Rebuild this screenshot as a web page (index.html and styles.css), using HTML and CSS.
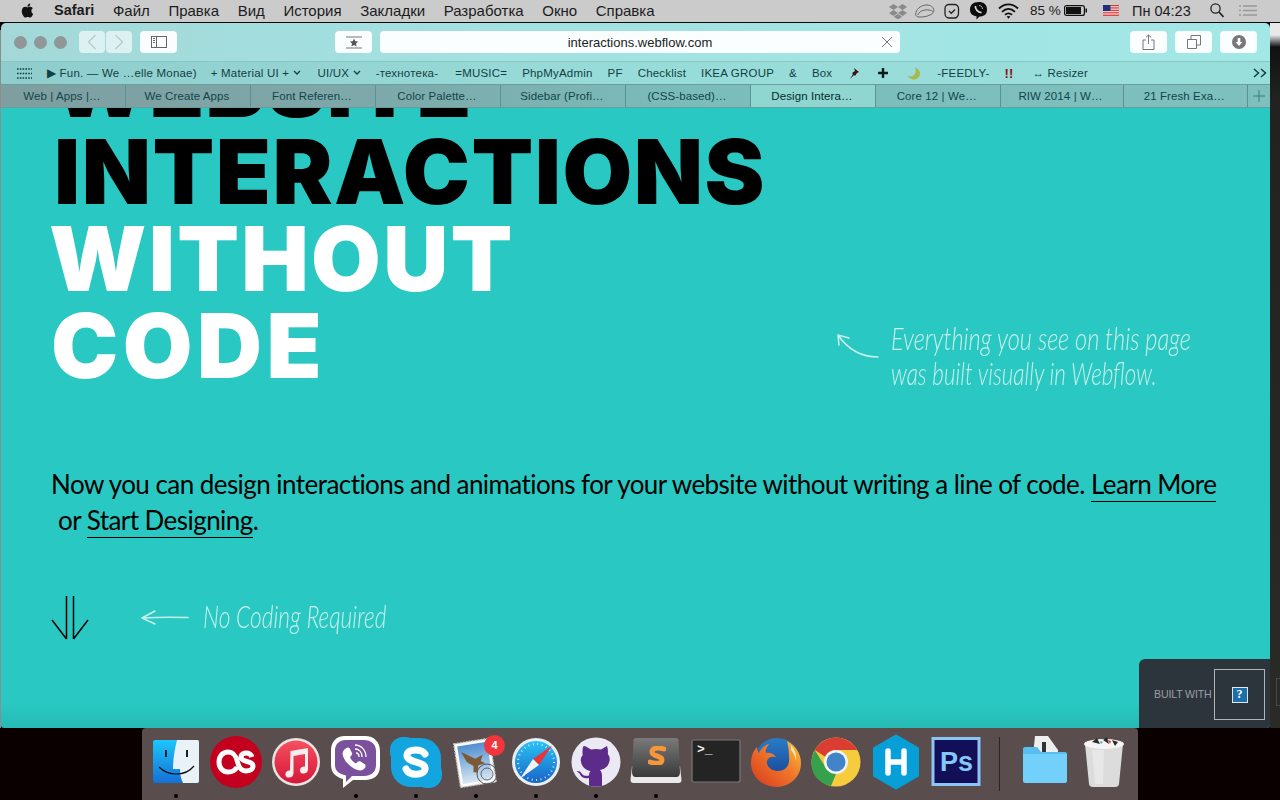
FILE: index.html
```html
<!DOCTYPE html>
<html lang="ru">
<head>
<meta charset="utf-8">
<title>interactions.webflow.com</title>
<link rel="stylesheet" href="styles.css">
</head>
<body>
<div class="desktop">
  <header class="menubar">
    <svg class="apple" viewBox="0 0 24 24"><path d="M18.71 19.5c-.83 1.24-1.71 2.45-3.05 2.47-1.34.03-1.77-.79-3.29-.79-1.53 0-2 .77-3.27.82-1.31.05-2.3-1.32-3.14-2.53C4.25 17 2.94 12.45 4.7 9.39c.87-1.52 2.43-2.48 4.12-2.51 1.28-.02 2.5.87 3.29.87.78 0 2.26-1.07 3.8-.91.65.03 2.47.26 3.64 1.98-.09.06-2.17 1.28-2.15 3.81.03 3.02 2.65 4.03 2.68 4.04-.03.07-.42 1.44-1.38 2.83M13 3.5c.73-.83 1.94-1.46 2.94-1.5.13 1.17-.34 2.35-1.04 3.19-.69.85-1.83 1.51-2.95 1.42-.15-1.15.41-2.35 1.05-3.11z"/></svg>
    <nav class="menus">
      <b>Safari</b><span>Файл</span><span>Правка</span><span>Вид</span><span>История</span><span>Закладки</span><span>Разработка</span><span>Окно</span><span>Справка</span>
    </nav>
    <div class="extras">
      <svg class="ex-drop" viewBox="0 0 18 16"><path fill="#8a8a8a" d="M4.5 1 9 4 4.500 7 0 4zM13.500 1 18 4l-4.500 3L9 4zM4.500 7 9 10l-4.500 3L0 10zM13.500 7 18 10l-4.500 3L9 10zM4.700 13.800 9 11l4.300 2.800L9 16.500z"/></svg>
      <svg class="ex-cloud" viewBox="0 0 20 14"><g fill="none" stroke="#666" stroke-width="1"><path d="M4 13C1 13 0 10.500 1 8.500 2 4 7 1 12 1c4 0 6 2 6.500 4 1 2-.5 5-3.500 6-4 2-8 2-11 2z"/><path d="M3 11c0-3 6-6 11-5 2 .3 3 1 4 1.500"/></g></svg>
      <svg class="ex-clock" viewBox="0 0 16 16"><path fill="none" stroke="#222" stroke-width="1.300" d="M5 1.500h5.500c2 0 4 1.500 4 4v5c0 2.500-2 4.500-4 4.500H5c-2.500 0-4-2-4-4.500v-5C1 3 3 1.500 5 1.500zM5 8l2.300 2.300L11 6.500"/></svg>
      <svg class="ex-viber" viewBox="0 0 17 18"><path fill="#0b0b0b" d="M8.500 0C14 0 17 2.500 17 7.500S14 14.500 9.500 14.500L6.500 17.500V14.300C2.500 13.500 0 12 0 7.500S3 0 8.500 0z"/><path fill="none" stroke="#ddd" stroke-width="1.700" d="M5.500 4c-.7 3 2.500 6.500 6 6.700"/><path fill="none" stroke="#ddd" stroke-width=".8" d="M9 3.500c2 0 3.500 1.500 3.500 3.500"/></svg>
      <svg class="ex-wifi" viewBox="0 0 21 16"><g fill="none" stroke="#111" stroke-width="1.800"><path d="M1 5.500C6.500 0 14.500 0 20 5.500"/><path d="M4 8.800C8 5 13 5 17 8.800"/><path d="M7 11.800c2-1.700 5-1.700 7 0"/></g><path fill="#111" d="M10.500 15.800 8.600 13.600c1.100-.8 2.700-.8 3.800 0z"/></svg>
      <span class="ex-batt-text">85 %</span>
      <svg class="ex-batt" viewBox="0 0 23 11"><rect x=".6" y=".6" width="19.800" height="9.800" rx="2" fill="none" stroke="#111" stroke-width="1.200"/><rect x="2" y="2" width="15" height="7" fill="#111"/><rect x="21.500" y="3.500" width="1.500" height="4" fill="#111"/></svg>
      <svg class="ex-flag" viewBox="0 0 16 11"><rect width="16" height="11" fill="#fff"/><path stroke="#c22" stroke-width=".9" d="M0 .5h16M0 2.200h16M0 3.900h16M0 5.600h16M0 7.300h16M0 9h16M0 10.600h16"/><rect width="7.500" height="6" fill="#22307a"/></svg>
      <span class="ex-time">Пн 04:23</span>
      <svg class="ex-search" viewBox="0 0 14 15"><circle cx="5.500" cy="5.500" r="4.600" fill="none" stroke="#222" stroke-width="1.300"/><path stroke="#222" stroke-width="1.700" d="M9 9l4.500 5"/></svg>
      <svg class="ex-list" viewBox="0 0 18 11"><path stroke="#999" stroke-width="1.500" d="M0 1h2M4 1h14M0 5.500h2M4 5.500h14M0 10h2M4 10h14"/></svg>
    </div>
  </header>

  <div class="backdrop"></div>
  <div class="backdrop-left"></div>

  <main class="window">
    <div class="toolbar">
      <div class="lights"><i></i><i></i><i></i></div>
      <div class="nav-pair">
        <button class="tb-btn tb-nav"><svg width="10" height="16" viewBox="0 0 10 16"><path fill="none" stroke="#b9c6c6" stroke-width="1.200" d="M8.500 1 1.500 8l7 7"/></svg></button>
        <button class="tb-btn tb-nav"><svg width="10" height="16" viewBox="0 0 10 16"><path fill="none" stroke="#b9c6c6" stroke-width="1.200" d="M1.500 1l7 7-7 7"/></svg></button>
      </div>
      <button class="tb-btn tb-wide tb-side"><svg width="16" height="12" viewBox="0 0 16 12"><rect x=".5" y=".5" width="15" height="11" fill="none" stroke="#666"/><path stroke="#666" d="M5.500 0v12M2 2.500h2M2 4.500h2M2 6.500h2"/></svg></button>
      <button class="tb-btn tb-wide tb-fav"><svg width="18" height="13" viewBox="0 0 18 13"><path stroke="#777" d="M1 1h16M1 12h16"/><path fill="#555" d="M9 2.500l1.200 2.700 3 .3-2.200 2 .6 2.900L9 9l-2.600 1.400.6-2.900-2.200-2 3-.3z"/></svg></button>
      <div class="url">
        <span class="url-text">interactions.webflow.com</span>
        <svg class="url-x" width="12" height="12" viewBox="0 0 12 12"><path stroke="#777" stroke-width="1" d="M1 1l10 10M11 1 1 11"/></svg>
      </div>
      <div class="tb-right">
        <button class="tb-btn tb-wide"><svg width="13" height="16" viewBox="0 0 13 16"><path fill="none" stroke="#777" d="M4 6H1v9.500h11V6H9M6.500 10V1M3.800 3.500 6.500 1l2.700 2.500"/></svg></button>
        <button class="tb-btn tb-wide"><svg width="14" height="14" viewBox="0 0 14 14"><path fill="none" stroke="#777" d="M.5 4.500h9v9h-9zM4 4.500V.5h9.500V10H9.500"/></svg></button>
        <button class="tb-btn tb-wide"><svg width="14" height="14" viewBox="0 0 14 14"><circle cx="7" cy="7" r="7" fill="#777"/><path fill="#fff" d="M5.700 3h2.600v4h2L7 11 3.700 7h2z"/></svg></button>
      </div>
    </div>

    <div class="bookmarks">
      <svg class="bm-grid" width="15" height="11" viewBox="0 0 15 11"><path stroke="#123f42" stroke-width="1.600" stroke-dasharray="1.600 1.200" d="M0 1h15M0 5.500h15M0 10h15"/></svg>
      <span class="bm">▶ Fun. — We …elle Monae)</span>
      <span class="bm bm-far">+ Material UI + <svg width="8" height="6" viewBox="0 0 8 6"><path fill="none" stroke="#123f42" stroke-width="1.300" d="M1 1l3 3 3-3"/></svg></span>
      <span class="bm bm-mid">UI/UX <svg width="8" height="6" viewBox="0 0 8 6"><path fill="none" stroke="#123f42" stroke-width="1.300" d="M1 1l3 3 3-3"/></svg></span>
      <span class="bm">-технотека-</span>
      <span class="bm bm-music">=MUSIC=</span>
      <span class="bm">PhpMyAdmin</span>
      <span class="bm">PF</span>
      <span class="bm">Checklist</span>
      <span class="bm">IKEA GROUP</span>
      <span class="bm">&amp;</span>
      <span class="bm">Box</span>
      <svg class="bm-ico" width="13" height="13" viewBox="0 0 13 13"><path fill="#411" d="M7 1l5 4-2 1-2 3-1-1-4 4 3-5-1-1 3-2z"/></svg>
      <svg class="bm-ico bm-plus" width="10" height="10" viewBox="0 0 10 10"><path stroke="#0b1a1a" stroke-width="2.400" d="M5 0v10M0 5h10"/></svg>
      <svg class="bm-ico bm-moon" width="13" height="13" viewBox="0 0 13 13"><path fill="#a9b94e" d="M8 .5c3 1 5 3 5 6 0 3.500-3 6-6 6-3 0-5-1.500-6.500-4 3 1.500 5.500 1 7-1C9 6 9 3 8 .5z"/></svg>
      <span class="bm bm-feedly">-FEEDLY-</span>
      <span class="bm bm-bang">!!</span>
      <span class="bm bm-resizer">↔ Resizer</span>
      <svg class="bm-more" width="14" height="10" viewBox="0 0 14 10"><path fill="none" stroke="#123f42" stroke-width="1.500" d="M1 1l4.500 4L1 9M8 1l4.500 4L8 9"/></svg>
    </div>

    <div class="tabs">
      <span class="tab">Web | Apps |…</span>
      <span class="tab">We Create Apps</span>
      <span class="tab">Font Referen…</span>
      <span class="tab">Color Palette…</span>
      <span class="tab">Sidebar (Profi…</span>
      <span class="tab">(CSS-based)…</span>
      <span class="tab tab-active">Design Intera…</span>
      <span class="tab">Core 12 | We…</span>
      <span class="tab">RIW 2014 | W…</span>
      <span class="tab">21 Fresh Exa…</span>
      <span class="tab tab-add"><svg width="12" height="12" viewBox="0 0 12 12"><path stroke="#3f7a7a" d="M6 0v12M0 6h12"/></svg></span>
    </div>

    <section class="page">
      <div class="hero">
        <h1 class="title">
          <span class="t-line t-website">WEBSITE</span>
          <span class="t-line t-inter">INTERACTIONS</span>
          <span class="t-line t-white t-without">WITHOUT</span>
          <span class="t-line t-white t-code">CODE</span>
        </h1>
        <div class="note">
          <svg class="note-arrow" width="44" height="28" viewBox="0 0 44 28"><path fill="none" stroke="#c9f0ea" stroke-width="1.600" stroke-linecap="round" d="M42 25C27 25 13 19 2 3M2 3l1 10M2 3l11 3"/></svg>
          <p class="hand note-text"><span class="hand-line hl-1">Everything you see on this page</span><span class="hand-line hl-2">was built visually in Webflow.</span></p>
        </div>
      </div>
      <p class="lead">
        <span class="lead-line">Now you can design interactions and animations for your website without writing a line of code. <a class="lnk">Learn More</a></span>
        <span class="lead-line lead-second">or <a class="lnk">Start Designing</a>.</span>
      </p>
      <div class="scroll-row">
        <svg width="38" height="44" viewBox="0 0 38 44"><g fill="none" stroke="#000" stroke-width="1.500"><path d="M15.500 0v43M1 24l14.500 19M22.500 0v43M37 24 22.500 43"/></g></svg>
        <svg class="left-arrow" width="48" height="16" viewBox="0 0 48 16"><path fill="none" stroke="#c9f0ea" stroke-width="1.500" stroke-linecap="round" d="M47 7.500C33 7 17 7 1 8M1 8l13-7M1 8l13 6"/></svg>
        <span class="hand hand-line hl-3">No Coding Required</span>
      </div>

      <aside class="badge">
        <span class="badge-text">BUILT WITH</span>
        <span class="badge-box"><span class="badge-q">?</span></span>
      </aside>
    </section>
  </main>

  <footer class="dock">
    <div class="app on"><svg viewBox="0 0 52 52"><defs><linearGradient id="fb" x1="0" y1="0" x2="0" y2="1"><stop offset="0" stop-color="#1cc6fb"/><stop offset="1" stop-color="#1570d6"/></linearGradient></defs><rect x="3" y="4" width="46" height="43" rx="2" fill="url(#fb)"/><path fill="#e9f2f7" d="M27 4h20a2 2 0 0 1 2 2v39a2 2 0 0 1-2 2H33c-2-4-3-8-3-14h-7c0-11 2-21 4-29z"/><path fill="#123" d="M15 14h2v7h-2zM36 14h2v7h-2z"/><path fill="none" stroke="#111" stroke-width="1.200" d="M9 31c9 9 26 10 35-1"/></svg></div>
    <div class="app"><svg viewBox="0 0 52 52"><circle cx="26" cy="26" r="26" fill="#c3001e"/><path fill="none" stroke="#fff" stroke-width="5" d="M27 31c-2 4-6 5-9 5-5 0-9-4-9-10s4-10 9-10c6 0 8 4 9.500 10 1.500 6 3.500 9 8.500 9 4 0 7-2 7-5 0-6-12-3-12-9 0-3 3-4 5-4 3 0 5 1 6 4"/></svg></div>
    <div class="app"><svg viewBox="0 0 52 52"><defs><linearGradient id="it" x1="0" y1="0" x2="0" y2="1"><stop offset="0" stop-color="#f6505f"/><stop offset="1" stop-color="#d5173a"/></linearGradient></defs><circle cx="26" cy="26" r="24" fill="#e8e4e4"/><circle cx="26" cy="26" r="21.500" fill="url(#it)"/><path fill="#f4eeee" d="M20.500 15 38 12v21c0 3-2 4.500-4.500 4.500S29.500 36 30 33.500c.5-2.500 3-3.500 5-3V18l-11.500 2v17c0 3-2 4.500-4.500 4.500s-4-1.500-3.500-4c.5-2.500 3-3.500 4.500-3z"/></svg></div>
    <div class="app on"><svg viewBox="0 0 52 52"><path fill="#fff" d="M15 0h20c9 0 15 6 15 15v15c0 9-6 14-15 14H23L13 52V43C6 41 1 37 1 29V15C1 6 6 0 15 0z"/><path fill="#7b519d" d="M16 4h18c7 0 12 4 12 11v14c0 7-5 11-12 11H22l-6 6v-6.500C9 38 5 35 5 29V15C5 8 9 4 16 4z"/><path fill="#fff" d="M15 13c2-2 4-2 5 0l2 4c.5 1 0 2-1 3l-1 1c1 3 3 5 6 6.500l1.500-1.500c1-1 2-1 3-.5l4 2.500c1.500 1 1.500 3 0 4.500-2 2-4 2.500-7 1.500C21 32 15 26 13 20c-1-3 0-5 2-7z"/><path fill="none" stroke="#fff" stroke-width="1.300" d="M25 9c6 0 11 5 11 12M25 13c4 0 7 3 7 8M26 17c2 0 3 2 3 4"/></svg></div>
    <div class="app on"><svg viewBox="0 0 52 52"><g fill="#12a5e0"><rect x="1" y="2" width="50" height="49" rx="20"/><rect x="0" y="1" width="28" height="28" rx="13"/><rect x="24" y="24" width="28" height="28" rx="13"/></g><path fill="none" stroke="#fff" stroke-width="7" stroke-linecap="round" d="M35 18c-3-5-17-6-18 1-1 8 19 6 18 14-1 7-16 7-19 0"/></svg></div>
    <div class="app on app-mail"><svg viewBox="0 0 52 52"><defs><linearGradient id="sky" x1="0" y1="0" x2="0" y2="1"><stop offset="0" stop-color="#4f90d0"/><stop offset="1" stop-color="#d8e6f2"/></linearGradient></defs><g transform="rotate(-9 24 27)"><rect x="7" y="5" width="36" height="44" fill="#fff" stroke="#c7c7c7" stroke-width="1.500" stroke-dasharray="2 1"/><rect x="10" y="8" width="30" height="38" fill="url(#sky)"/><path fill="#7c5a38" d="M13 14l13 9 8-3-3 6 4 3-7 1-2 7-4-1 1-6-6-5z"/></g><circle cx="37" cy="38" r="10" fill="none" stroke="#555" stroke-width="1"/><circle cx="37" cy="38" r="6" fill="none" stroke="#666" stroke-width="1"/></svg><span class="mail-badge">4</span></div>
    <div class="app on"><svg viewBox="0 0 52 52"><defs><linearGradient id="sf" x1="0" y1="0" x2="0" y2="1"><stop offset="0" stop-color="#29c4f4"/><stop offset="1" stop-color="#1a63c8"/></linearGradient></defs><circle cx="26" cy="26" r="24" fill="#e9eef2"/><circle cx="26" cy="26" r="21" fill="url(#sf)"/><circle cx="26" cy="26" r="18" fill="none" stroke="#cfe9f7" stroke-width="2" stroke-dasharray="1 3.500"/><path fill="#e9343a" d="M42 9.500 23 23l6 6z"/><path fill="#f2f2f2" d="M10 42.500 23 23l6 6z"/></svg></div>
    <div class="app on"><svg viewBox="0 0 52 52"><defs><clipPath id="gh"><circle cx="26" cy="26" r="24.500"/></clipPath></defs><circle cx="26" cy="26" r="24.500" fill="#ebe9f3"/><g clip-path="url(#gh)"><path fill="#5d2c8a" d="M15 10l6 3.500c3-.8 7-.8 10 0l6-3.500c1 3 1.200 6 .8 8 1.700 2 2.200 4 1.700 7-1 6-6 8.500-9.500 9 1.500 1.500 2 3.500 2 6v12H19V42c-4 1-7.500 0-9.500-4.500l-3-2.500 3.500.5 3 3.500c2 1 4.500 1 6 .5 0-2 .5-3 1.500-4.500-3.500-.5-8.500-3-9.500-9-.5-3 0-5 1.700-7-.4-2-.3-5 .3-8.500z"/></g></svg></div>
    <div class="app on"><svg viewBox="0 0 52 52"><defs><linearGradient id="sb" x1="0" y1="0" x2="0" y2="1"><stop offset="0" stop-color="#7a7a7a"/><stop offset="1" stop-color="#3a3a3a"/></linearGradient><filter id="glow"><feGaussianBlur stdDeviation=".6"/></filter></defs><path fill="#e9e9e9" d="M2 30h48l1.500 14c0 2-1 3-3 3H3.500c-2 0-3-1-3-3z"/><path fill="url(#sb)" d="M6 2h40c1.500 0 2.500 1 2.500 2.500L50 36c0 2-1 5-3 5H5c-2 0-3-3-3-5L3.500 4.500C3.500 3 4.500 2 6 2z"/><path fill="none" stroke="#f5963a" stroke-width="5" stroke-linecap="round" filter="url(#glow)" d="M34 13c-6-2-12-1-12 3 0 5 10 3 10 8 0 4-7 4-12 2"/></svg></div>
    <div class="app"><svg viewBox="0 0 52 52"><rect x="2" y="4" width="48" height="42" rx="2" fill="#242424" stroke="#777" stroke-width="1.200"/><text class="term-text" x="7" y="17">&gt;_</text></svg></div>
    <div class="app"><svg viewBox="0 0 52 52"><defs><linearGradient id="ffb" x1="0" y1="0" x2="0" y2="1"><stop offset="0" stop-color="#2a7cc8"/><stop offset="1" stop-color="#173e8c"/></linearGradient><linearGradient id="ffo" x1="1" y1="0" x2="0" y2="1"><stop offset="0" stop-color="#fbc33c"/><stop offset=".45" stop-color="#f0762a"/><stop offset="1" stop-color="#d8381e"/></linearGradient></defs><circle cx="27" cy="25" r="23" fill="url(#ffb)"/><path fill="url(#ffo)" d="M37 5c8 4 14 12 14 22 0 14-11 24-25 24C12 51 1 40 1 27c0-6 2-12 6-16 0 3 1 5 2 6 2-5 6-8 10-9-3 4-4 7-3 9 4-1 8 1 10 4-4-1-8 0-9 4-1 5 4 10 11 10 8 0 12-6 11-14 0-7-1-12-2-16z"/><path fill="#fbe9b0" d="M41 9c4 5 6 10 5 16-.5-4-2-8-5-11z"/></svg></div>
    <div class="app"><svg viewBox="0 0 52 52"><circle cx="26" cy="26" r="24.500" fill="#f7cb3e"/><path fill="#37a04a" d="M4.800 14 16 32l10 6-5 12C8 47 1 38 1.500 26c0-4 1.300-8 3.300-12z"/><path fill="#dc3d33" d="M26 1.500c9 0 17 5 21.200 12.500H26c-5 0-9 2.500-10.500 7L4.800 14C9 6.500 17 1.500 26 1.500z"/><circle cx="26" cy="26" r="12" fill="#f3f3f3"/><circle cx="26" cy="26" r="9.500" fill="#4284c9"/></svg></div>
    <div class="app"><svg class="svg-free" viewBox="0 0 52 52"><path fill="#069fd8" stroke="#069fd8" stroke-width="3" stroke-linejoin="round" d="M26 0l21.500 12.500v27L26 52 4.500 39.500v-27z"/><path fill="none" stroke="#fff" stroke-width="5.500" stroke-linecap="round" d="M18 15v22M34 15v22M18 26h16"/></svg></div>
    <div class="app"><svg viewBox="0 0 52 52"><rect x="3" y="2.500" width="46" height="46" fill="#120f58" stroke="#8cc4f3" stroke-width="3"/><text class="ps-text" x="10" y="35">Ps</text></svg></div>
    <div class="dock-sep"></div>
    <div class="app"><svg class="svg-free" viewBox="0 0 52 52"><path fill="#eee" d="M17 0h13l10 14v6H15z"/><path fill="#333" d="M24 6h4v14h-4z"/><path fill="#58bdf1" d="M5 13c0-1 .5-2 2-2h12l4 5h24c1.500 0 2 1 2 2v4H5z"/><path fill="#73d0fb" d="M5 18h44v27c0 1-1 2-2 2H7c-1 0-2-1-2-2z"/></svg></div>
    <div class="app"><svg class="svg-free" viewBox="0 0 52 52"><path fill="#dcdcdc" d="M7 8h38l-4 40c0 2-2 3-4 3H15c-2 0-4-1-4-3z"/><path fill="#efefef" opacity=".6" d="M14 14h12l-1 34H17z"/><ellipse cx="26" cy="8" rx="20" ry="5" fill="#f4f4f4"/><path fill="#2a2a2a" d="M14 6l5-4 3 6zM25 4l4-3 2 7zM34 4l6 2-3 4z"/><path fill="#d0402a" d="M30 4l3 1-1 3z"/><path fill="#38b0b0" d="M22 5l3 1-2 2z"/></svg></div>
  </footer>
</div>
</body>
</html>
```

FILE: styles.css
```css
* { box-sizing: border-box; }
html, body { margin: 0; padding: 0; }
body { width: 1280px; height: 800px; overflow: hidden; background: #0a0000; font-family: "Liberation Sans", Arial, sans-serif; }
.desktop { position: relative; width: 1280px; height: 800px; overflow: hidden; background: #0a0000; }

/* menu bar */
.menubar { display: flex; align-items: center; height: 23px; padding: 0 23px 1px 0; background: #cbcbcb; border-bottom: 1px solid #0a0a0a; color: #111; font-size: 15px; }
.apple { width: 17px; height: 17px; margin-left: 19px; fill: #111; }
.menus { display: flex; margin-left: 18px; column-gap: 18.600px; color: #1c1c1c; }
.menus b { font-weight: 700; font-size: 14.500px; }
.extras { display: flex; align-items: center; margin-left: auto; color: #1c1c1c; }
.ex-drop { width: 18px; height: 16px; }
.ex-cloud { width: 20px; height: 14px; margin-left: 8px; }
.ex-clock { width: 16px; height: 16px; margin-left: 9px; }
.ex-viber { width: 17px; height: 18px; margin-left: 10px; }
.ex-wifi { width: 21px; height: 16px; margin-left: 11px; }
.ex-batt-text { width: 29px; margin-left: 11px; white-space: nowrap; font-size: 13.500px; }
.ex-batt { width: 23px; height: 11px; margin-left: 5px; }
.ex-flag { width: 16px; height: 11px; margin-left: 16px; }
.ex-time { margin-left: 13px; width: 59px; white-space: nowrap; font-size: 14.500px; }
.ex-search { width: 14px; height: 15px; margin-left: 19px; }
.ex-list { width: 18px; height: 11px; margin-left: 15px; }

/* what shows behind the window */
.backdrop { position: absolute; left: 1270px; top: 23px; width: 10px; height: 705px; background: linear-gradient(#e8e8e8 0, #e8e8e8 12px, #111 24px, #222220 76px, #2a2a26 100%); }
.backdrop::after { content: ""; position: absolute; left: 6px; top: 655px; width: 10px; height: 26px; border: 1px solid #4a4a46; }
.backdrop-left { position: absolute; left: 0; top: 30px; width: 1px; height: 698px; background: #8c8c8c; }

/* browser window */
.window { position: absolute; left: 1px; top: 23px; width: 1269px; height: 705px; display: flex; flex-direction: column; overflow: hidden; border-radius: 5px 5px 3px 3px; }
.toolbar { display: flex; align-items: center; flex: none; height: 39px; padding: 0 13px 0 13px; background: linear-gradient(90deg, #a4d8d8 0, #a2e2e1 40%, #a2e8e6 100%); border-bottom: 1px solid #86c6c4; }
.lights { display: flex; column-gap: 7px; width: 65px; }
.lights i { display: block; width: 13px; height: 13px; border-radius: 50%; background: #8f9799; }
.tb-btn { display: flex; align-items: center; justify-content: center; height: 22px; padding: 0; border: 0; border-radius: 4px; background: rgba(255,255,255,.95); }
.nav-pair { display: flex; column-gap: 1px; }
.tb-nav { width: 26px; background: rgba(255,255,255,.62); }
.tb-wide { width: 37px; }
.tb-side { margin-left: 8px; }
.tb-fav { margin-left: 158px; }
.url { position: relative; display: flex; align-items: center; justify-content: center; width: 520px; height: 22px; margin-left: 8px; border-radius: 4px; background: #fafefe; color: #222; font-size: 13px; }
.url-x { position: absolute; right: 7px; top: 5px; }
.tb-right { display: flex; column-gap: 8px; margin-left: auto; }

.bookmarks { display: flex; align-items: center; flex: none; height: 23px; padding: 0 3px 0 16px; background: linear-gradient(90deg, #8fcdcd 0, #98dcd9 50%, #98dedb 100%); color: #123f42; font-size: 11.500px; letter-spacing: .2px; white-space: nowrap; column-gap: 15px; border-bottom: 1px solid #6c9d9d; }
.bm svg { vertical-align: 1px; }
.bm-far { margin-left: -1px; }
.bm-mid { margin-left: 2px; }
.bm-music { margin-left: 2px; }
.bm-plus { margin-left: 3px; }
.bm-moon { margin-left: 4px; }
.bm-feedly { margin-left: 2px; }
.bm-bang { color: #8b1010; font-weight: 700; font-size: 13px; }
.bm-resizer { margin-left: 4px; }
.bm-more { margin-left: auto; }

.tabs { display: grid; grid-template-columns: repeat(7, 125px) 124.500px 123px 124.500px 1fr; flex: none; height: 23px; background: linear-gradient(90deg, #7f9ea0 0, #7da9aa 30%, #7abdbb 55%, #7dc0be 100%); color: #124548; font-size: 11.500px; letter-spacing: .1px; border-bottom: 1px solid #6a9c9c; }
.tab { display: flex; align-items: center; justify-content: center; padding-right: 2px; white-space: nowrap; border-right: 1px solid #5d9090; }
.tab-active { background: #8fd6d1; color: #082a30; }
.tab-add { border-right: 0; padding-right: 0; }

/* page */
.page { position: relative; flex: 1; min-height: 0; padding-left: 50px; background: linear-gradient(#29c8c2 0, #29c8c2 96%, #27bab4 100%); overflow: hidden; }
.hero { display: flex; height: 425px; margin-top: -67px; }
.title { flex: none; margin: 0; font-family: Inter, "Liberation Sans", sans-serif; font-weight: 900; font-size: 90px; line-height: 87px; color: #000; }
.t-line { display: block; white-space: nowrap; }
.t-white { color: #fff; }
.t-website { letter-spacing: .8px; }
.t-inter { letter-spacing: 1.500px; margin-left: 3px; }
.t-without { letter-spacing: 2.300px; margin-left: -2px; }
.t-code { letter-spacing: 4.500px; }
.note { position: relative; flex: none; display: flex; column-gap: 11px; margin-left: auto; margin-top: 280px; width: 434px; height: 80px; }
.note-arrow { flex: none; margin-top: 11px; }
.hand { margin: 0; font-family: Lato, "Liberation Sans", sans-serif; font-style: italic; font-weight: 300; color: #c9f0ea; font-size: 31px; line-height: 35px; }
.note-text { flex: none; }
.hand-line { display: block; white-space: nowrap; transform-origin: left center; transform: scaleX(.72); }
.hl-1 { transform: scaleX(.76); }
.hl-2 { transform: scaleX(.725); }
.hl-3 { margin-left: -38px; margin-top: -4px; transform: scaleX(.735); }

.lead { margin: 0; font-family: Lato, "Liberation Sans", sans-serif; font-size: 26px; letter-spacing: -.55px; line-height: 36px; color: #000; }
.lead-line { display: block; white-space: nowrap; }
.lead-second { padding-left: 7px; }
.lnk { color: #000; border-bottom: 1px solid #000; padding-bottom: 1px; }

.scroll-row { display: flex; align-items: center; margin-top: 58px; column-gap: 52px; }

/* badge over the page */
.badge { position: absolute; right: 0; bottom: 0; display: flex; align-items: center; justify-content: space-between; width: 131px; height: 69px; padding: 0 5px 0 15px; border-radius: 6px 0 0 0; background: #2d353c; }
.badge-text { color: #9a9fa3; font-size: 10.500px; letter-spacing: -.1px; white-space: nowrap; }
.badge-box { display: flex; align-items: center; justify-content: center; flex: none; width: 51px; height: 51px; margin-top: 2px; border: 1px solid #b0b4b6; }
.badge-q { display: flex; align-items: center; justify-content: center; width: 16px; height: 16px; border: 1px solid #dfe8ee; background: #1e6fa8; color: #fff; font-family: "Liberation Serif", serif; font-weight: 700; font-size: 12px; }

/* dock */
.dock { position: absolute; left: 142px; top: 728px; display: flex; width: 996px; height: 72px; padding: 0 4px; background: #5a4d4d; border-radius: 4px 4px 0 0; }
.app { position: relative; flex: none; width: 60px; height: 72px; padding: 8px 4px 0; }
.app svg { display: block; width: 52px; height: 52px; overflow: visible; }
.app.on::after { content: ""; position: absolute; left: 28px; top: 66px; width: 4px; height: 4px; border-radius: 50%; background: #000; }
.dock-sep { flex: none; width: 1px; height: 54px; margin: 9px 14px 0 13px; background: #2a2424; }
.mail-badge { position: absolute; left: 38px; top: 7px; width: 21px; height: 21px; border-radius: 50%; background: #f0363c; color: #fff; font-size: 11px; font-weight: 700; line-height: 21px; text-align: center; }
.term-text { font-family: "Liberation Mono", monospace; font-size: 13px; fill: #eee; font-weight: 700; }
.ps-text { font-family: "Liberation Sans", sans-serif; font-size: 27px; font-weight: 700; fill: #84c6f7; }
```
